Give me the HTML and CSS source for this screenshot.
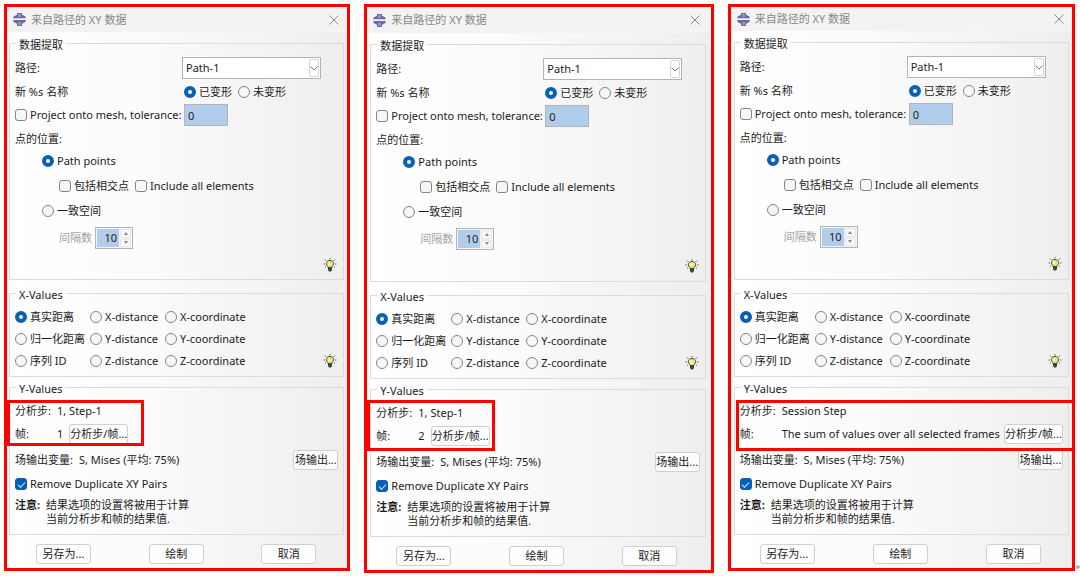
FILE: index.html
```
<!DOCTYPE html>
<html lang="zh-CN">
<head>
    <meta charset="UTF-8">
    <meta name="viewport" content="width=device-width, initial-scale=1.0">
    <title>来自路径的 XY 数据</title>
    <link rel="stylesheet" href="styles.css">
</head>
<body>
    <svg class="sprite" aria-hidden="true">
        <symbol id="logo" viewBox="0 0 13 13">
            <path fill="#6a6aa6" d="M4 0h5v2h1l1 1h1l1 2.500H0L1 3h1l1-1h1z"/>
            <path fill="#f4f4fb" d="M0 5.500h13v1.500H0z"/>
            <path fill="#6a6aa6" d="M0 7h13l-1 2.500h-1l-1 1H9V13H4v-2.500H3l-1-1H1z"/>
            <path fill="#9494c6" d="M5 1h3v3H5zM5 9h3v3H5z"/>
        </symbol>
        <symbol id="bulb" viewBox="0 0 14 14">
            <path stroke="#5d6f66" d="M7 0v1.500M2 1.500l1.500 1.500M12 1.500L10.500 3M.5 6H2M12 6h1.500M2 9.500l1-.8M12 9.500l-1-.8" fill="none"/>
            <path fill="#f2e27c" stroke="#3d4f38" d="M7 2.500c2.200 0 3.600 1.500 3.600 3.200C10.600 7.500 9 8.200 9 9.500H5c0-1.300-1.600-2-1.600-3.800C3.400 4 4.800 2.500 7 2.500z"/>
            <path fill="#fff8bd" d="M5 4h2v3H5z"/>
            <path fill="#33463c" d="M5 9.500h4V12l-1 1.500H6L5 12z"/>
        </symbol>
        <symbol id="cross" viewBox="0 0 10 10">
            <path fill="none" stroke="#8a8a8a" d="M.5.5l9 9M9.500.5l-9 9"/>
        </symbol>
        <symbol id="chevron" viewBox="0 0 8 5">
            <path fill="none" stroke="#777" d="M.5.5L4 4 7.500.5"/>
        </symbol>
    </svg>

    <main class="sheet">
        <section class="dialog">
            <header class="titlebar">
                <svg class="logo"><use href="#logo"/></svg>
                <h2>来自路径的 XY 数据</h2>
                <button class="close" aria-label="关闭"><svg><use href="#cross"/></svg></button>
            </header>

            <fieldset class="group extract">
                <legend>数据提取</legend>
                <div class="row">
                    <label class="caption" for="path1">路径:</label>
                    <div class="combo">
                        <select id="path1"><option>Path-1</option></select>
                        <span class="combo-arrow"><svg><use href="#chevron"/></svg></span>
                    </div>
                </div>
                <div class="row medium">
                    <span class="caption">新 %s 名称</span>
                    <div class="choices">
                        <label><input type="radio" name="shape1" checked>已变形</label>
                        <label><input type="radio" name="shape1">未变形</label>
                    </div>
                </div>
                <div class="row">
                    <label class="caption"><input type="checkbox">Project onto mesh, tolerance:</label>
                    <div class="choices"><input type="text" class="tolerance" value="0" aria-label="tolerance"></div>
                </div>
                <div class="row">点的位置:</div>
                <div class="row short indent">
                    <label><input type="radio" name="points1" checked>Path points</label>
                </div>
                <div class="row tall indent-more">
                    <label><input type="checkbox">包括相交点</label>
                    <label><input type="checkbox">Include all elements</label>
                </div>
                <div class="row short indent">
                    <label><input type="radio" name="points1">一致空间</label>
                </div>
                <div class="row tallest indent-more">
                    <label class="disabled" for="count1">间隔数</label>
                    <div class="spinner">
                        <input type="text" id="count1" value="10">
                        <div class="arrows"><button class="up" aria-label="增加"></button><button class="down" aria-label="减少"></button></div>
                    </div>
                </div>
                <div class="row short tip"><svg class="bulb"><use href="#bulb"/></svg></div>
            </fieldset>

            <fieldset class="group">
                <legend>X-Values</legend>
                <div class="axis">
                    <label><input type="radio" name="x1" checked>真实距离</label>
                    <label><input type="radio" name="x1">X-distance</label>
                    <label><input type="radio" name="x1">X-coordinate</label>
                    <label><input type="radio" name="x1">归一化距离</label>
                    <label><input type="radio" name="x1">Y-distance</label>
                    <label><input type="radio" name="x1">Y-coordinate</label>
                    <label><input type="radio" name="x1">序列 ID</label>
                    <label><input type="radio" name="x1">Z-distance</label>
                    <label><input type="radio" name="x1">Z-coordinate</label>
                    <svg class="bulb"><use href="#bulb"/></svg>
                </div>
            </fieldset>

            <fieldset class="group values">
                <legend>Y-Values</legend>
                <div class="steps">
                    <div class="line"><span class="key">分析步:</span><span>1, Step-1</span></div>
                    <div class="line frame"><span class="key">帧:</span><span>1</span><button class="btn step-btn">分析步/帧...</button></div>
                    <span class="marker marker-first"></span>
                </div>
                <div class="row field"><span>场输出变量:</span><span>S, Mises (平均: 75%)</span><button class="btn field-btn">场输出...</button></div>
                <div class="row short"><label><input type="checkbox" checked>Remove Duplicate XY Pairs</label></div>
                <div class="note"><b>注意:</b><p>结果选项的设置将被用于计算<br>当前分析步和帧的结果值.</p></div>
            </fieldset>

            <footer class="actions">
                <button class="btn">另存为...</button>
                <button class="btn">绘制</button>
                <button class="btn">取消</button>
            </footer>
        </section>

        <section class="dialog dialog-second">
            <header class="titlebar">
                <svg class="logo"><use href="#logo"/></svg>
                <h2>来自路径的 XY 数据</h2>
                <button class="close" aria-label="关闭"><svg><use href="#cross"/></svg></button>
            </header>

            <fieldset class="group extract">
                <legend>数据提取</legend>
                <div class="row">
                    <label class="caption" for="path2">路径:</label>
                    <div class="combo">
                        <select id="path2"><option>Path-1</option></select>
                        <span class="combo-arrow"><svg><use href="#chevron"/></svg></span>
                    </div>
                </div>
                <div class="row medium">
                    <span class="caption">新 %s 名称</span>
                    <div class="choices">
                        <label><input type="radio" name="shape2" checked>已变形</label>
                        <label><input type="radio" name="shape2">未变形</label>
                    </div>
                </div>
                <div class="row">
                    <label class="caption"><input type="checkbox">Project onto mesh, tolerance:</label>
                    <div class="choices"><input type="text" class="tolerance" value="0" aria-label="tolerance"></div>
                </div>
                <div class="row">点的位置:</div>
                <div class="row short indent">
                    <label><input type="radio" name="points2" checked>Path points</label>
                </div>
                <div class="row tall indent-more">
                    <label><input type="checkbox">包括相交点</label>
                    <label><input type="checkbox">Include all elements</label>
                </div>
                <div class="row short indent">
                    <label><input type="radio" name="points2">一致空间</label>
                </div>
                <div class="row tallest indent-more">
                    <label class="disabled" for="count2">间隔数</label>
                    <div class="spinner">
                        <input type="text" id="count2" value="10">
                        <div class="arrows"><button class="up" aria-label="增加"></button><button class="down" aria-label="减少"></button></div>
                    </div>
                </div>
                <div class="row short tip"><svg class="bulb"><use href="#bulb"/></svg></div>
            </fieldset>

            <fieldset class="group">
                <legend>X-Values</legend>
                <div class="axis">
                    <label><input type="radio" name="x2" checked>真实距离</label>
                    <label><input type="radio" name="x2">X-distance</label>
                    <label><input type="radio" name="x2">X-coordinate</label>
                    <label><input type="radio" name="x2">归一化距离</label>
                    <label><input type="radio" name="x2">Y-distance</label>
                    <label><input type="radio" name="x2">Y-coordinate</label>
                    <label><input type="radio" name="x2">序列 ID</label>
                    <label><input type="radio" name="x2">Z-distance</label>
                    <label><input type="radio" name="x2">Z-coordinate</label>
                    <svg class="bulb"><use href="#bulb"/></svg>
                </div>
            </fieldset>

            <fieldset class="group values">
                <legend>Y-Values</legend>
                <div class="steps">
                    <div class="line"><span class="key">分析步:</span><span>1, Step-1</span></div>
                    <div class="line frame"><span class="key">帧:</span><span>2</span><button class="btn step-btn">分析步/帧...</button></div>
                    <span class="marker marker-second"></span>
                </div>
                <div class="row field"><span>场输出变量:</span><span>S, Mises (平均: 75%)</span><button class="btn field-btn">场输出...</button></div>
                <div class="row short"><label><input type="checkbox" checked>Remove Duplicate XY Pairs</label></div>
                <div class="note"><b>注意:</b><p>结果选项的设置将被用于计算<br>当前分析步和帧的结果值.</p></div>
            </fieldset>

            <footer class="actions">
                <button class="btn">另存为...</button>
                <button class="btn">绘制</button>
                <button class="btn">取消</button>
            </footer>
        </section>

        <section class="dialog dialog-third">
            <header class="titlebar">
                <svg class="logo"><use href="#logo"/></svg>
                <h2>来自路径的 XY 数据</h2>
                <button class="close" aria-label="关闭"><svg><use href="#cross"/></svg></button>
            </header>

            <fieldset class="group extract">
                <legend>数据提取</legend>
                <div class="row">
                    <label class="caption" for="path3">路径:</label>
                    <div class="combo">
                        <select id="path3"><option>Path-1</option></select>
                        <span class="combo-arrow"><svg><use href="#chevron"/></svg></span>
                    </div>
                </div>
                <div class="row medium">
                    <span class="caption">新 %s 名称</span>
                    <div class="choices">
                        <label><input type="radio" name="shape3" checked>已变形</label>
                        <label><input type="radio" name="shape3">未变形</label>
                    </div>
                </div>
                <div class="row">
                    <label class="caption"><input type="checkbox">Project onto mesh, tolerance:</label>
                    <div class="choices"><input type="text" class="tolerance" value="0" aria-label="tolerance"></div>
                </div>
                <div class="row">点的位置:</div>
                <div class="row short indent">
                    <label><input type="radio" name="points3" checked>Path points</label>
                </div>
                <div class="row tall indent-more">
                    <label><input type="checkbox">包括相交点</label>
                    <label><input type="checkbox">Include all elements</label>
                </div>
                <div class="row short indent">
                    <label><input type="radio" name="points3">一致空间</label>
                </div>
                <div class="row tallest indent-more">
                    <label class="disabled" for="count3">间隔数</label>
                    <div class="spinner">
                        <input type="text" id="count3" value="10">
                        <div class="arrows"><button class="up" aria-label="增加"></button><button class="down" aria-label="减少"></button></div>
                    </div>
                </div>
                <div class="row short tip"><svg class="bulb"><use href="#bulb"/></svg></div>
            </fieldset>

            <fieldset class="group">
                <legend>X-Values</legend>
                <div class="axis">
                    <label><input type="radio" name="x3" checked>真实距离</label>
                    <label><input type="radio" name="x3">X-distance</label>
                    <label><input type="radio" name="x3">X-coordinate</label>
                    <label><input type="radio" name="x3">归一化距离</label>
                    <label><input type="radio" name="x3">Y-distance</label>
                    <label><input type="radio" name="x3">Y-coordinate</label>
                    <label><input type="radio" name="x3">序列 ID</label>
                    <label><input type="radio" name="x3">Z-distance</label>
                    <label><input type="radio" name="x3">Z-coordinate</label>
                    <svg class="bulb"><use href="#bulb"/></svg>
                </div>
            </fieldset>

            <fieldset class="group values">
                <legend>Y-Values</legend>
                <div class="steps steps-wide">
                    <div class="line"><span class="key">分析步:</span><span>Session Step</span></div>
                    <div class="line frame"><span class="key">帧:</span><span>The sum of values over all selected frames</span><button class="btn step-btn">分析步/帧...</button></div>
                    <span class="marker marker-third"></span>
                </div>
                <div class="row field"><span>场输出变量:</span><span>S, Mises (平均: 75%)</span><button class="btn field-btn">场输出...</button></div>
                <div class="row short"><label><input type="checkbox" checked>Remove Duplicate XY Pairs</label></div>
                <div class="note"><b>注意:</b><p>结果选项的设置将被用于计算<br>当前分析步和帧的结果值.</p></div>
            </fieldset>

            <footer class="actions">
                <button class="btn">另存为...</button>
                <button class="btn">绘制</button>
                <button class="btn">取消</button>
            </footer>

            <svg class="end-mark" viewBox="0 0 4 4" aria-hidden="true"><path stroke="#888" d="M0 2h4M2 0v4"/></svg>
        </section>
    </main>
</body>
</html>
```
FILE: styles.css
```
* {
    box-sizing: border-box;
}

body {
    margin: 0;
    background: #fff;
    color: #1c1c1c;
    font-family: "Noto Sans", "Noto Sans CJK SC", sans-serif;
    font-size: 11px;
    line-height: 14px;
}

button,
input,
select {
    margin: 0;
    padding: 0;
    color: inherit;
    font: inherit;
}

.sprite {
    display: none;
}

.sheet {
    display: grid;
    grid-template-columns: 346fr 349fr 347fr;
    gap: 14px;
    align-items: start;
    padding: 4px 5px 4px 4px;
}

.dialog {
    position: relative;
    border: 3px solid #fe0000;
    background: linear-gradient(to right, #fff, #fbfbfb 40%, #eee);
    white-space: nowrap;
}

/* Title bar */
.titlebar {
    display: flex;
    align-items: center;
    gap: 5px;
    height: 25px;
    padding: 0 8px 0 6px;
    background: #f3f3f3;
    color: #888;
}

.titlebar h2 {
    margin: 0;
    font-size: 11px;
    font-weight: normal;
}

.logo {
    width: 13px;
    height: 13px;
}

.close {
    display: flex;
    margin-left: auto;
    border: none;
    background: none;
}

.close svg {
    width: 10px;
    height: 10px;
}

/* Groups */
.group {
    min-width: 0;
    margin: 4px 3px 0 2px;
    padding: 4px 5px;
    border: 1px solid #dcdcdc;
}

.group legend {
    margin-left: 1px;
    padding: 4px 3px 0;
}

.extract {
    margin-top: 2px;
}

.values {
    margin-top: 1px;
}

.row {
    display: flex;
    align-items: center;
    height: 24px;
}

.row.short {
    height: 20px;
}

.row.medium {
    height: 23px;
}

.row.tall {
    gap: 6px;
    height: 30px;
}

.row.tallest {
    gap: 3px;
    height: 34px;
}

.indent {
    padding-left: 27px;
}

.indent-more {
    padding-left: 44px;
}

.caption {
    width: 167px;
}

label {
    display: flex;
    align-items: center;
    gap: 3px;
}

.disabled {
    color: #a3a3a3;
}

.choices {
    display: flex;
    gap: 6px;
    padding-left: 2px;
}

/* Radios and check boxes */
input[type="radio"],
input[type="checkbox"] {
    flex: none;
    width: 12px;
    height: 12px;
    border: 1px solid #858585;
    background: #f7f7f7;
    appearance: none;
}

input[type="radio"] {
    border-radius: 50%;
}

input[type="checkbox"] {
    border-radius: 3px;
}

input[type="radio"]:checked {
    border: 4px solid #0560b6;
    background: #fff;
}

input[type="checkbox"]:checked {
    display: flex;
    align-items: center;
    justify-content: center;
    border-color: #0560b6;
    background: #0560b6;
}

input[type="checkbox"]:checked::after {
    content: "";
    width: 6px;
    height: 3px;
    border: solid #cfe2f5;
    border-width: 0 0 1px 1px;
    transform: rotate(-45deg);
}

/* Fields */
.combo {
    position: relative;
    width: 139px;
}

.combo select {
    display: block;
    width: 100%;
    height: 22px;
    padding-left: 3px;
    border: 1px solid #b4b4b8;
    border-radius: 0;
    background: #fff;
    appearance: none;
}

.combo-arrow {
    position: absolute;
    top: 2px;
    right: 2px;
    bottom: 2px;
    display: flex;
    align-items: center;
    justify-content: center;
    width: 10px;
    border: 1px solid #d4d4d4;
    border-radius: 2px;
    pointer-events: none;
}

.combo-arrow svg {
    flex: none;
    width: 8px;
    height: 5px;
}

.tolerance {
    width: 44px;
    height: 22px;
    padding-left: 3px;
    border: 1px solid #b4b4b8;
    background: #b1cdec;
}

.spinner {
    display: flex;
    width: 38px;
    height: 22px;
    padding: 1px;
    border: 1px solid #b4b4b8;
    background: #f4f4f4;
}

.spinner input {
    width: 22px;
    padding-right: 2px;
    border: none;
    background: #b1cdec;
    text-align: right;
}

.arrows {
    display: flex;
    flex: 1;
    flex-direction: column;
    gap: 1px;
    padding-left: 1px;
}

.arrows button {
    display: flex;
    flex: 1;
    align-items: center;
    justify-content: center;
    border: 1px solid #e6e6e6;
    border-radius: 2px;
    background: #fafafa;
}

.arrows button::after {
    content: "";
    border: 2px solid transparent;
}

.arrows .up::after {
    border-top: none;
    border-bottom: 3px solid #888;
}

.arrows .down::after {
    border-top: 3px solid #888;
    border-bottom: none;
}

.bulb {
    width: 14px;
    height: 14px;
}

.tip {
    justify-content: flex-end;
    padding-right: 1px;
}

.axis {
    display: grid;
    grid-template-columns: 75px 75px 1fr auto;
    grid-auto-rows: 22px;
    align-items: center;
    padding-right: 1px;
}

.axis label:nth-of-type(3n+1) {
    grid-column: 1;
}

/* Y values */
.steps {
    position: relative;
    width: fit-content;
}

.steps-wide {
    width: auto;
}

.line {
    display: flex;
    align-items: center;
    height: 22px;
}

.frame {
    height: 24px;
}

.key {
    width: 42px;
}

.step-btn {
    margin-left: 6px;
}

.steps-wide .step-btn {
    margin-left: auto;
}

.marker {
    position: absolute;
    border: 3px solid #fe0000;
    pointer-events: none;
}

.marker-first {
    inset: 0 -16px 0 -8px;
}

.marker-second {
    inset: -2px -5px -3px -9px;
}

.marker-third {
    inset: 0 -12px -5px -4px;
}

.field {
    gap: 6px;
    height: 28px;
}

.field .btn {
    margin-left: auto;
}

.note {
    display: flex;
    padding: 4px 0;
}

.note b {
    width: 31px;
}

.note p {
    margin: 0;
}

/* Buttons */
.btn {
    height: 20px;
    border: 1px solid #d0d0d0;
    border-radius: 3px;
    background: #fdfdfd;
}

.step-btn {
    width: 59px;
}

.field-btn {
    width: 45px;
}

.actions {
    display: flex;
    justify-content: space-between;
    padding: 9px 31px 4px 29px;
}

.actions .btn {
    width: 55px;
}

/* The three windows differ slightly in their frames */
.dialog-second .titlebar {
    height: 26px;
    padding-right: 11px;
}

.dialog-second .group {
    margin-right: 5px;
    margin-left: 3px;
}

.dialog-second .extract {
    padding-bottom: 5px;
}

.dialog-second .actions {
    padding-right: 34px;
}

.dialog-third .titlebar {
    height: 24px;
}

.dialog-third .group {
    margin-left: 3px;
}

.dialog-third .extract {
    padding-bottom: 5px;
}

.end-mark {
    position: absolute;
    right: -8px;
    bottom: -1px;
    width: 4px;
    height: 4px;
}
```
